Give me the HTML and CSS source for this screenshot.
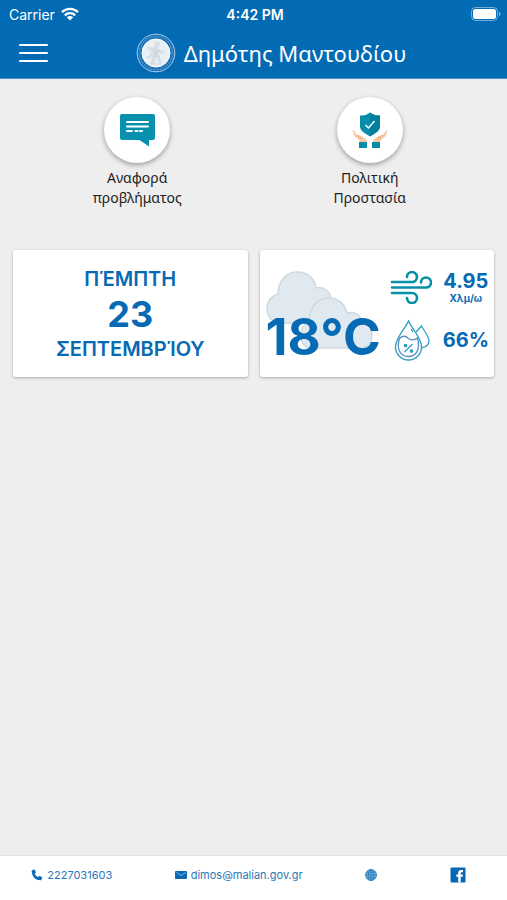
FILE: index.html
```html
<!DOCTYPE html>
<html lang="el">
<head>
    <meta charset="UTF-8">
    <meta name="viewport" content="width=device-width, initial-scale=1">
    <title>Δημότης Μαντουδίου</title>
    <link rel="stylesheet" href="styles.css">
</head>
<body>
<header class="header">
    <div class="status">
        <div class="carrier">
            <span>Carrier</span>
            <svg width="18" height="14" viewBox="0 0 18 14" fill="none" stroke="#fff" stroke-width="2.4">
                <path d="M1 5.2a11.4 11.4 0 0 1 16 0"/>
                <path d="M3.8 8.3a7.4 7.4 0 0 1 10.4 0"/>
                <path d="M9 13.6L5.8 10.3a4.6 4.6 0 0 1 6.4 0z" fill="#fff" stroke="none"/>
            </svg>
        </div>
        <div class="time">4:42 PM</div>
        <div class="battery">
            <svg width="30" height="14" viewBox="0 0 30 14">
                <rect x="0.5" y="0.5" width="26" height="13" rx="4" fill="none" stroke="#fff" stroke-opacity=".45"/>
                <rect x="2" y="2" width="23" height="10" rx="2.5" fill="#fff"/>
                <path d="M28 4.8c2 .6 2 3.8 0 4.4z" fill="#fff" opacity=".5"/>
            </svg>
        </div>
    </div>
    <div class="navbar">
        <button class="menu" type="button" aria-label="Μενού">
            <span class="bar"></span>
            <span class="bar"></span>
            <span class="bar"></span>
        </button>
        <div class="brand">
            <svg width="40" height="40" viewBox="0 0 40 40">
                <circle cx="20" cy="20" r="18.8" fill="#176fb7" stroke="#a9cfea" stroke-width="1"/>
                <circle cx="20" cy="20" r="16.5" fill="none" stroke="#4f97ce" stroke-width="1.5" stroke-dasharray="1.5 1"/>
                <circle cx="20" cy="20" r="14" fill="#e9f0f4" stroke="#fff" stroke-width="1"/>
                <path d="M19 9c3-2 6 0 5 3l-2 3 4 3 3-2-2 5-4-1 1 5 3 5h-4l-3-5-2 6h-4l2-7-3 2-3-1 4-3 1-4-3-2-2-3 4 1 4 1z" fill="#d6e0e5"/>
                <path d="M20 12l-2 4 2 4-2 5M23 17l-3 4 4 3M14 31h12" fill="none" stroke="#c2d0d8" stroke-width=".8"/>
            </svg>
            <h1 class="title">Δημότης Μαντουδίου</h1>
        </div>
    </div>
</header>

<main class="content">
    <nav class="services">
        <a href="#report" class="service">
            <span class="circle">
                <svg width="66" height="66" viewBox="0 0 66 66">
                    <path d="M18 17h31q2 0 2 2v22q0 2-2 2h-4v6.5L35.5 43H18q-2 0-2-2V19q0-2 2-2z" fill="#0891ae"/>
                    <path d="M23 25h21M23 29.500h21M23 34h5M31.500 34h2M36 34h2" fill="none" stroke="#fff" stroke-width="2" stroke-linecap="round"/>
                </svg>
            </span>
            <span class="label">Αναφορά<br>προβλήματος</span>
        </a>
        <a href="#protection" class="service">
            <span class="circle">
                <svg width="66" height="66" viewBox="0 0 66 66">
                    <path d="M33 15.500c3 2.500 6 3 10 3v11c0 4-5 7-10 10-5-3-10-6-10-10v-11c4 0 7-.5 10-3z" fill="#078daa"/>
                    <path d="M33 15.500c3 2.500 6 3 10 3v11c0 4-5 7-10 10z" fill="#037f9e"/>
                    <path d="M28.500 28l3 3 6-7" fill="none" stroke="#fff" stroke-width="1.500"/>
                    <path d="M15.500 33c2 0 2.500 2.500 4 4.500 1.500 1 3 .5 4 1.500 2 1 5 2 6.500 5v1h-7c-1-4-5-4-6-7z" fill="#f7c9a3"/>
                    <path d="M50.500 33c-2 0-2.500 2.500-4 4.500-1.500 1-3 .5-4 1.500-2 1-5 2-6.500 5v1h7c1-4 5-4 6-7z" fill="#f7c9a3"/>
                    <path d="M20 38l6 4M46 38l-6 4" stroke="#eba878" stroke-width="1"/>
                    <rect x="22" y="45" width="8" height="6" fill="#078daa"/>
                    <rect x="35" y="45" width="8" height="6" fill="#078daa"/>
                </svg>
            </span>
            <span class="label">Πολιτική<br>Προστασία</span>
        </a>
    </nav>

    <div class="cards">
        <section class="card date">
            <div class="day">ΠΈΜΠΤΗ</div>
            <div class="number">23</div>
            <div class="month">ΣΕΠΤΕΜΒΡΊΟΥ</div>
        </section>

        <section class="card weather">
            <div class="sky">
                <svg class="clouds" width="108" height="80" viewBox="0 0 108 80" fill="#e0e9ef" stroke="#ced9e0" stroke-width="1.5">
                    <path d="M16 52C5 52 1 44 1 38 1 29 7 24 12 23 12 10 21 1 31 1c11 0 18 7 19 16 8-2 15 4 15 12v23z"/>
                    <path d="M45 77C38 77 35 71 35 65c0-7 3-12 8-14 0-14 8-24 20-24 9 0 16 6 18 15 8-2 14 2 15 9 6 1 10 6 10 13 0 8-5 13-12 13z"/>
                </svg>
                <div class="temp">18°C</div>
            </div>
            <div class="stats">
                <svg width="42" height="34" viewBox="0 0 42 34" fill="none" stroke="#078fa6" stroke-width="2.6" stroke-linecap="round">
                    <path d="M2 12h20a5 5 0 1 0-5-5"/>
                    <path d="M2 17.500h34a5 5 0 1 0-5-5"/>
                    <path d="M2 23h20a5 5 0 1 1-5 5"/>
                </svg>
                <div class="value">4.95<small class="unit">Χλμ/ω</small></div>
                <svg width="42" height="42" viewBox="0 0 42 42" fill="none" stroke="#2e9fbe" stroke-width="1.3">
                    <path d="M26 13l5.500-6C34 12 39 17 39 22c0 3-3 6-8 7"/>
                    <path d="M18.500 2C15 10 5.500 19 5.500 28a13 13 0 0 0 26 0C31.500 19 22 10 18.500 2z"/>
                    <path d="M9.500 19.500c3-3 6-3 9 0 3 2 6 2 9-.5 3 11-1 18.500-9 18.500S6 30 9.500 19.500z" stroke="#5b8cc8"/>
                    <path d="M22.500 25l-8 8M21 10l2 3"/>
                    <circle cx="15.500" cy="26.500" r="1.200" fill="#2e9fbe"/>
                    <circle cx="21.500" cy="32" r="1.200" fill="#2e9fbe"/>
                </svg>
                <div class="value">66%</div>
            </div>
        </section>
    </div>
</main>

<footer class="footer">
    <a href="tel:2227031603">
        <svg width="12" height="12" viewBox="0 0 12 12">
            <path d="M1 1.500L3 .6q.6-.2.900.4l.9 2q.2.500-.2.900l-1 .9q1.200 2.200 3.400 3.400l.9-1q.4-.4.900-.2l2 .9q.6.300.4.900l-.8 2q-.2.500-.8.500Q1.500 11 .6 2.200q0-.5.400-.7z" fill="#0b6ab5"/>
        </svg>
        2227031603
    </a>
    <a href="mailto:dimos@malian.gov.gr">
        <svg width="12" height="12" viewBox="0 0 12 12">
            <rect x="0" y="2" width="12" height="8" rx="1" fill="#0b6ab5"/>
            <path d="M1.500 3.500L6 6.500l4.500-3" fill="none" stroke="#8cc0e4" stroke-width=".9"/>
        </svg>
        dimos@malian.gov.gr
    </a>
    <a href="#website" aria-label="Ιστοσελίδα">
        <svg width="12" height="12" viewBox="0 0 12 12" fill="none" stroke="#2c7dbd" stroke-width=".8">
            <circle cx="6" cy="6" r="5.5" fill="#6faad8"/>
            <ellipse cx="6" cy="6" rx="2.6" ry="5.5"/>
            <path d="M6 .5v11M.5 6h11M1.300 3.200h9.400M1.300 8.800h9.400"/>
        </svg>
    </a>
    <a href="#facebook" class="facebook" aria-label="Facebook">
        <svg width="16" height="16" viewBox="0 0 16 16">
            <rect x=".5" y=".5" width="15" height="15" rx="1" fill="#0668b3"/>
            <path d="M8.200 15.500V9.800H6.300V7.500h1.900V6q0-2.900 2.800-2.900h2v2.200h-1.300q-1 0-1 1v1.200H13l-.3 2.300h-2v5.700z" fill="#fff"/>
        </svg>
    </a>
</footer>
</body>
</html>
```

FILE: styles.css
```css
*{margin: 0;padding: 0;box-sizing: border-box;}
body{min-height: 100vh;display: flex;flex-direction: column;background: #eee;font-family: Inter, "Noto Sans", sans-serif;color: #222;}
a{text-decoration: none;color: inherit;}
svg{display: block;flex: none;}

.header{background: #036bb4;color: #fff;border-bottom: 1px solid #4b94c9;}
.status{display: grid;grid-template-columns: 1fr auto 1fr;align-items: center;height: 28px;padding: 0 6px 0 9px;font-size: 14px;}
.carrier{display: flex;align-items: center;gap: 6px;}
.time{font-size: 14px;font-weight: 600;}
.battery{justify-self: end;}
.navbar{display: grid;grid-template-columns: 35px 1fr;align-items: center;height: 50px;padding: 0 19px;}
.menu{width: 29px;display: flex;flex-direction: column;gap: 6px;background: none;border: 0;cursor: pointer;}
.bar{width: 100%;height: 2px;background: #fff;border-radius: 1px;}
.brand{display: flex;align-items: center;justify-content: center;gap: 8px;}
.title{font-family: "Noto Sans", sans-serif;font-size: 22px;line-height: 26px;font-weight: 400;white-space: nowrap;}

.content{flex: 1;padding: 18px 13px;}
.services{display: grid;grid-template-columns: 1fr 1fr;height: 153px;padding: 0 8px;}
.service{display: flex;flex-direction: column;align-items: center;gap: 5px;}
.circle{border-radius: 50%;background: #fff;box-shadow: 0 2px 5px rgba(0,0,0,.35);}
.label{font-family: "Noto Sans", sans-serif;font-size: 14px;line-height: 20px;text-align: center;}

.cards{display: grid;grid-template-columns: 1fr 1fr;gap: 12px;}
.card{height: 127px;background: #fff;border-radius: 3px;box-shadow: 0 1px 3px rgba(0,0,0,.3);color: #066ab4;font-weight: 600;}
.date{display: flex;flex-direction: column;align-items: center;justify-content: center;font-size: 20px;line-height: 28px;}
.number{font-size: 36px;line-height: 42px;font-weight: 700;}
.weather{display: flex;align-items: center;justify-content: space-between;padding: 0 5px 0 6px;}
.sky{position: relative;padding: 46px 0 0;}
.clouds{position: absolute;left: 0;top: 8px;}
.temp{position: relative;font-size: 51px;line-height: 56px;font-weight: 700;}
.stats{display: grid;grid-template-columns: 42px auto;gap: 15px 11px;padding-top: 3px;align-items: center;justify-items: center;}
.value{font-size: 20px;line-height: 22px;font-weight: 700;text-align: center;}
.unit{display: block;font-size: 10px;line-height: 12px;}

.footer{display: flex;align-items: center;justify-content: space-around;height: 45px;padding-bottom: 7px;background: #fff;border-top: 1px solid #e2e2e2;color: #2878b8;font-size: 11px;}
.footer a{display: flex;align-items: center;gap: 4px;}
.footer .facebook{padding: 0 10px;}
```
